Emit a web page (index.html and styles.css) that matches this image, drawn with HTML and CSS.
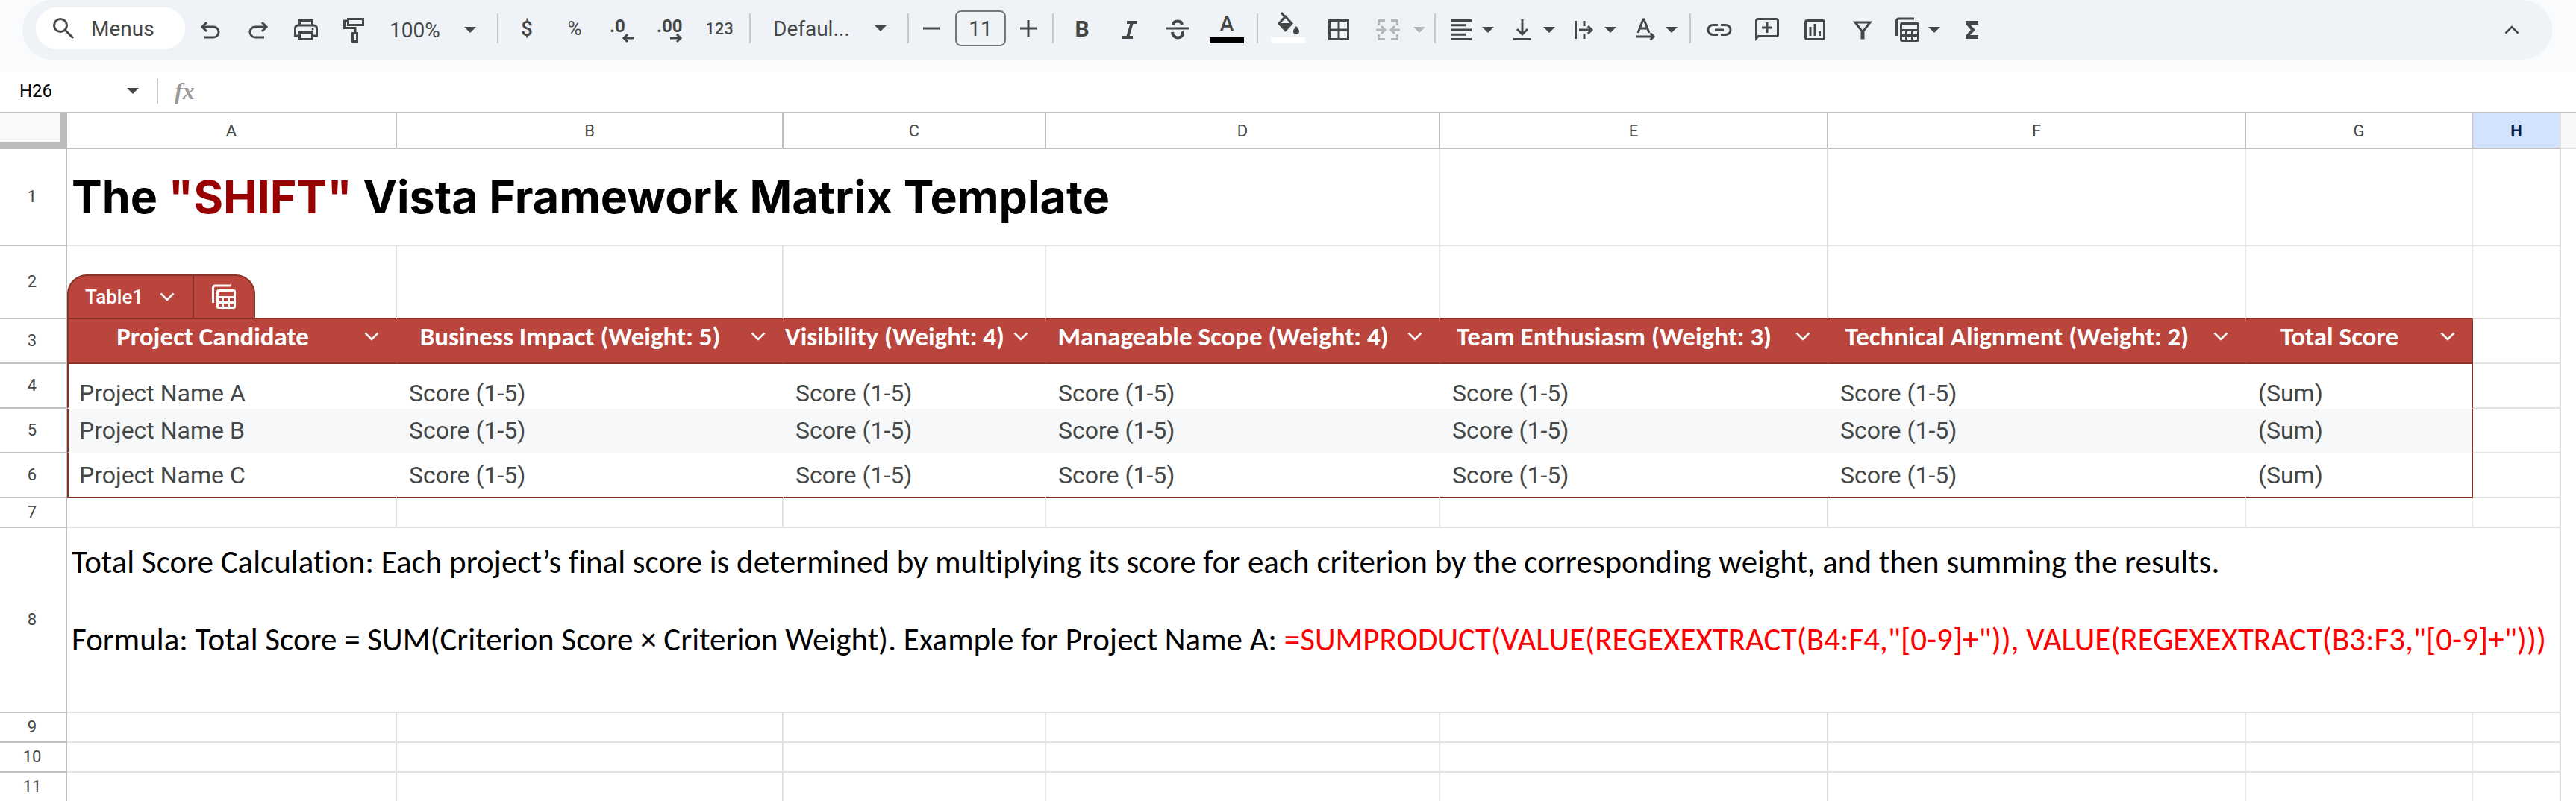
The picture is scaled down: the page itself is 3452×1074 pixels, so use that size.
FILE: index.html
```html
<!DOCTYPE html>
<html lang="en">
<head>
<meta charset="utf-8">
<title>Vista Framework Matrix</title>
<link rel="stylesheet" href="styles.css">
</head>
<body>
<svg class="defs" aria-hidden="true">
  <symbol id="arrow" viewBox="0 0 16 8"><path d="M0 0h16L8 8z" fill="currentColor"/></symbol>
  <symbol id="chevron" viewBox="0 0 20 12"><path d="M1.500 1.500L10 10l8.500-8.500" fill="none" stroke="currentColor" stroke-width="2.500"/></symbol>
  <symbol id="calc" viewBox="0 0 36 36"><path d="M3.500 26V6a3 3 0 0 1 3-3H27" fill="none" stroke="currentColor" stroke-width="3"/><path fill="currentColor" fill-rule="evenodd" d="M11 8h20a3 3 0 0 1 3 3v20a3 3 0 0 1-3 3H11a3 3 0 0 1-3-3V11a3 3 0 0 1 3-3zM11 11v6h20v-6zM11 20v4h4v-4zM18 20v4h5v-4zM26 20v4h5v-4zM11 27v4h4v-4zM18 27v4h5v-4zM26 27v4h5v-4z"/></symbol>
</svg>

<header class="chrome">
  <div class="toolbar" role="toolbar" aria-label="Formatting">
    <button class="search"><svg class="search-icon" viewBox="0 0 30 30"><circle cx="11" cy="11" r="8.500"/><path d="M17 17l11 11"/></svg>Menus</button>
    <button class="tool" aria-label="Undo"><svg class="icon" viewBox="0 0 36 36"><path d="M13 8L7 14l6 6M7 14h15a7 7 0 0 1 0 14H10"/></svg></button>
    <button class="tool" aria-label="Redo"><svg class="icon" viewBox="0 0 36 36"><path d="M23 8l6 6-6 6M29 14H14a7 7 0 0 0 0 14h12"/></svg></button>
    <button class="tool" aria-label="Print"><svg class="icon" viewBox="0 0 36 36"><path d="M9.500 12V5.500h17V12M9 26H3.500V16a4 4 0 0 1 4-4h21a4 4 0 0 1 4 4v10H27M9.500 21.500h17v9h-17z"/><circle class="solid" cx="27" cy="17" r="1.500"/></svg></button>
    <button class="tool" aria-label="Paint format"><svg class="icon" viewBox="0 0 36 36"><path d="M10.500 3.500h20v8h-20zM10 6H5.500v9.500H20V22M16.500 22.500h6v11h-6z"/></svg></button>
    <span class="picker picker-zoom"><select aria-label="Zoom"><option>100%</option></select><svg class="arrow"><use href="#arrow"/></svg></span>
    <span class="sep"></span>
    <button class="tool currency" aria-label="Format as currency">$</button>
    <button class="tool percent" aria-label="Format as percent">%</button>
    <button class="tool" aria-label="Decrease decimal places"><svg class="icon" viewBox="0 0 36 36"><text class="decimals" x="1" y="21">.0</text><path d="M34 29H20M25 24l-5 5 5 5"/></svg></button>
    <button class="tool" aria-label="Increase decimal places"><svg class="icon" viewBox="0 0 36 36"><text class="decimals" x="0" y="21">.00</text><path d="M18 29h14M27 24l5 5-5 5"/></svg></button>
    <button class="tool wide number">123</button>
    <span class="sep"></span>
    <span class="picker picker-font"><select aria-label="Font"><option>Defaul...</option></select><svg class="arrow"><use href="#arrow"/></svg></span>
    <span class="sep"></span>
    <span class="stepper">
      <button aria-label="Decrease font size"><svg class="icon-small" viewBox="0 0 22 22"><path d="M0 11h22"/></svg></button>
      <input aria-label="Font size" value="11">
      <button aria-label="Increase font size"><svg class="icon-small" viewBox="0 0 22 22"><path d="M0 11h22M11 0v22"/></svg></button>
    </span>
    <span class="sep"></span>
    <button class="tool bold" aria-label="Bold">B</button>
    <button class="tool" aria-label="Italic"><svg class="icon" viewBox="0 0 36 36"><path class="thick" d="M14 8h14M8 28h14M21 8l-6 20"/></svg></button>
    <button class="tool" aria-label="Strikethrough"><svg class="icon" viewBox="0 0 36 36"><path d="M2 16h32"/><path class="thick" d="M24 11c-.5-3-3-4.500-6-4.500s-6 1.500-6 5M11 21c.5 5 3.500 7.500 7 7.500s7-2 7-6c0-1-.3-1.500-.8-2.500"/></svg></button>
    <button class="tool wide swatch" aria-label="Text color"><span class="letter">A</span><span class="bar bar-black"></span></button>
    <span class="sep"></span>
    <button class="tool wide swatch" aria-label="Fill color"><svg class="fill-icon" viewBox="0 0 32 30"><path d="M7 1l5 6M12.500 6L4 15.500l8.500 9 8.500-9z"/><path class="solid" d="M3 15h19l-9.500 11zM27 19c3 4 4 5 4 7a4 4 0 0 1-8 0c0-2 1-3 4-7z"/></svg><span class="bar bar-white"></span></button>
    <button class="tool wide" aria-label="Borders"><svg class="icon" viewBox="0 0 36 36"><path d="M5.500 5.500h25v25h-25zM18 5v26M5 18h26"/></svg></button>
    <button class="tool merge" aria-label="Merge cells" disabled><svg class="icon" viewBox="0 0 36 36"><path d="M5.500 12V5.500H14M22 5.500h8.500V12M30.500 24v6.500H22M14 30.500H5.500V24M2 18h11M9 13l5 5-5 5M34 18H23M27 13l-5 5 5 5"/></svg><svg class="arrow"><use href="#arrow"/></svg></button>
    <span class="sep"></span>
    <button class="tool menu" aria-label="Horizontal align"><svg class="icon" viewBox="0 0 36 36"><path d="M4 5.500h28M4 11.800h20M4 18h28M4 24.200h20M4 30.500h28"/></svg><svg class="arrow"><use href="#arrow"/></svg></button>
    <button class="tool menu" aria-label="Vertical align"><svg class="icon" viewBox="0 0 36 36"><path d="M18 4v20M11 17l7 7 7-7M6 30.500h24"/></svg><svg class="arrow"><use href="#arrow"/></svg></button>
    <button class="tool menu" aria-label="Text wrapping"><svg class="icon" viewBox="0 0 36 36"><path d="M7.500 6v24M19 6v7M19 23v7M12 18h17M24 13l5 5-5 5"/></svg><svg class="arrow"><use href="#arrow"/></svg></button>
    <button class="tool menu" aria-label="Text rotation"><svg class="icon" viewBox="0 0 36 36"><path d="M9 22l7-18h1l7 18M12 16h9M6 27h24M25.500 22.500L30 27l-4.500 4.500"/></svg><svg class="arrow"><use href="#arrow"/></svg></button>
    <span class="sep"></span>
    <button class="tool" aria-label="Insert link"><svg class="icon" viewBox="0 0 36 36"><path d="M16 11.500H9.500a6.500 6.500 0 0 0 0 13H16M20 11.500h6.500a6.500 6.500 0 0 1 0 13H20M12 18h12"/></svg></button>
    <button class="tool" aria-label="Insert comment"><svg class="icon" viewBox="0 0 36 36"><path d="M3.500 30V5.500a2 2 0 0 1 2-2h25a2 2 0 0 1 2 2v19a2 2 0 0 1-2 2H6M18 8v14M11 15h14"/><path class="solid" d="M2 33V25h8z"/></svg></button>
    <button class="tool" aria-label="Insert chart"><svg class="icon" viewBox="0 0 36 36"><rect x="5.500" y="5.500" width="25" height="25" rx="2"/><path d="M12 14v12M18 10v16M24.500 20v6"/></svg></button>
    <button class="tool" aria-label="Create a filter"><svg class="icon" viewBox="0 0 36 36"><path d="M8 8h20l-9 11.500V29h-2v-9.500z"/></svg></button>
    <button class="tool menu" aria-label="Table views"><svg class="icon plain"><use href="#calc"/></svg><svg class="arrow"><use href="#arrow"/></svg></button>
    <button class="tool" aria-label="Functions"><svg class="icon plain" viewBox="0 0 36 36"><path fill="currentColor" d="M10 6h17v5H16l7 7-7 7h11v5H10v-4l7-8-7-8z"/></svg></button>
    <button class="tool collapse" aria-label="Hide the menus"><svg class="chevron up"><use href="#chevron"/></svg></button>
  </div>
</header>

<div class="formula-bar">
  <input class="name-box" aria-label="Name box" value="H26">
  <button class="name-menu" aria-label="Named ranges"><svg class="arrow"><use href="#arrow"/></svg></button>
  <label class="fx" for="formula">fx</label>
  <input class="formula" id="formula">
</div>

<table class="sheet">
  <colgroup>
    <col class="w-head"><col class="w-a"><col class="w-b"><col class="w-c"><col class="w-d"><col class="w-e"><col class="w-f"><col class="w-g"><col class="w-h"><col>
  </colgroup>
  <thead>
    <tr class="letters"><td class="corner"></td><th>A</th><th>B</th><th>C</th><th>D</th><th>E</th><th>F</th><th>G</th><th class="current">H</th><td class="edge"></td></tr>
  </thead>
  <tbody>
    <tr class="row-title"><th>1</th><td class="title" colspan="4">The <span class="accent">"SHIFT"</span> Vista Framework Matrix Template</td><td></td><td></td><td></td><td></td></tr>
    <tr class="row-tab"><th>2</th>
      <td class="tab-cell"><div class="tab"><button class="tab-name">Table1<svg class="chevron"><use href="#chevron"/></svg></button><button class="tab-views" aria-label="Table views"><svg class="icon plain"><use href="#calc"/></svg></button></div></td>
      <td></td><td></td><td></td><td></td><td></td><td></td><td></td></tr>
    <tr class="row-fields"><th>3</th>
      <td><div class="field"><span>Project Candidate</span><button aria-label="Project Candidate options"><svg class="chevron"><use href="#chevron"/></svg></button></div></td>
      <td><div class="field"><span>Business Impact (Weight: 5)</span><button aria-label="Business Impact options"><svg class="chevron"><use href="#chevron"/></svg></button></div></td>
      <td><div class="field"><span>Visibility (Weight: 4)</span><button aria-label="Visibility options"><svg class="chevron"><use href="#chevron"/></svg></button></div></td>
      <td><div class="field"><span>Manageable Scope (Weight: 4)</span><button aria-label="Manageable Scope options"><svg class="chevron"><use href="#chevron"/></svg></button></div></td>
      <td><div class="field"><span>Team Enthusiasm (Weight: 3)</span><button aria-label="Team Enthusiasm options"><svg class="chevron"><use href="#chevron"/></svg></button></div></td>
      <td><div class="field"><span>Technical Alignment (Weight: 2)</span><button aria-label="Technical Alignment options"><svg class="chevron"><use href="#chevron"/></svg></button></div></td>
      <td><div class="field"><span>Total Score</span><button aria-label="Total Score options"><svg class="chevron"><use href="#chevron"/></svg></button></div></td>
      <td></td></tr>
    <tr class="record low"><th>4</th><td>Project Name A</td><td>Score (1-5)</td><td>Score (1-5)</td><td>Score (1-5)</td><td>Score (1-5)</td><td>Score (1-5)</td><td>(Sum)</td><td></td></tr>
    <tr class="record band"><th>5</th><td>Project Name B</td><td>Score (1-5)</td><td>Score (1-5)</td><td>Score (1-5)</td><td>Score (1-5)</td><td>Score (1-5)</td><td>(Sum)</td><td></td></tr>
    <tr class="record last"><th>6</th><td>Project Name C</td><td>Score (1-5)</td><td>Score (1-5)</td><td>Score (1-5)</td><td>Score (1-5)</td><td>Score (1-5)</td><td>(Sum)</td><td></td></tr>
    <tr class="row-empty"><th>7</th><td></td><td></td><td></td><td></td><td></td><td></td><td></td><td></td></tr>
    <tr class="row-notes"><th>8</th><td class="notes" colspan="8">
      <p>Total Score Calculation: Each project’s final score is determined by multiplying its score for each criterion by the corresponding weight, and then summing the results.</p>
      <p>Formula: Total Score = SUM(Criterion Score × Criterion Weight). Example for Project Name A: <span class="formula-text">=SUMPRODUCT(VALUE(REGEXEXTRACT(B4:F4,"[0-9]+")), VALUE(REGEXEXTRACT(B3:F3,"[0-9]+")))</span></p></td></tr>
    <tr class="row-empty"><th>9</th><td></td><td></td><td></td><td></td><td></td><td></td><td></td><td></td></tr>
    <tr class="row-empty"><th>10</th><td></td><td></td><td></td><td></td><td></td><td></td><td></td><td></td></tr>
    <tr class="row-empty"><th>11</th><td></td><td></td><td></td><td></td><td></td><td></td><td></td><td></td></tr>
  </tbody>
</table>
</body>
</html>
```
FILE: styles.css
```css
:root {
  --ink: #444746;
  --line: #e1e1e1;
  --line-strong: #c0c0c0;
  --red: #b9453c;
  --red-dark: #86332a;
}

* { box-sizing: border-box; }

body {
  margin: 0;
  background: #fff;
  color: var(--ink);
  font-family: Roboto, sans-serif;
  font-size: 28px;
  overflow: hidden;
}

button, input, select {
  margin: 0;
  padding: 0;
  border: 0;
  background: none;
  color: inherit;
  font: inherit;
}

select { appearance: none; }

.defs { display: none; }

/* Toolbar */
.chrome {
  padding: 0 32px 16px 30px;
  background: #f9fbfd;
}

.toolbar {
  display: flex;
  align-items: center;
  height: 80px;
  padding: 0 22px 4px 18px;
  border-radius: 40px;
  background: #eff3f7;
}

.search {
  display: flex;
  align-items: center;
  gap: 22px;
  width: 200px;
  height: 56px;
  margin-right: 2px;
  padding-left: 22px;
  border-radius: 28px;
  background: #fff;
}

.search-icon { width: 30px; height: 30px; }

.search-icon, .icon, .icon-small, .fill-icon {
  flex: none;
  fill: none;
  stroke: currentColor;
  stroke-width: 3;
}

.icon { width: 36px; height: 36px; }
.icon-small { width: 22px; height: 22px; }
.icon.plain { stroke: none; }
.thick { stroke-width: 4; }
.solid { fill: currentColor; stroke: none; }

.decimals {
  fill: currentColor;
  stroke: none;
  font-size: 24px;
  font-weight: 700;
}

.tool {
  display: flex;
  align-items: center;
  justify-content: center;
  flex: none;
  width: 64px;
  height: 56px;
}

.tool .icon, .tool .arrow, .tool .chevron { margin-top: 4px; }
.tool.wide { width: 68px; }
.tool.menu, .tool.merge { justify-content: flex-start; gap: 10px; width: 82px; padding-left: 10px; }
.tool.merge { gap: 16px; width: 88px; padding-left: 14px; color: #b4b8ba; }
.tool.collapse { margin-left: auto; }

.arrow { flex: none; width: 16px; height: 8px; }
.chevron { flex: none; width: 20px; height: 12px; }
.chevron.up { transform: rotate(180deg); }

.currency { font-size: 28px; font-weight: 500; }
.percent { font-size: 26px; }
.number { font-size: 22px; font-weight: 500; }
.bold { font-size: 30px; font-weight: 700; }

.tool.swatch {
  flex-direction: column;
  align-self: flex-start;
  justify-content: flex-end;
  gap: 4px;
  height: 44px;
  margin-top: 14px;
}
.letter { line-height: 28px; font-weight: 500; }
.fill-icon { width: 32px; height: 30px; }
.bar { flex: none; width: 46px; height: 8px; }
.bar-black { background: #000; }
.bar-white { background: #fff; }

.sep {
  flex: none;
  width: 2px;
  height: 40px;
  margin: 0 6px;
  background: #c7cacd;
}

.picker { display: grid; align-items: center; flex: none; }
.picker > * { grid-area: 1 / 1; }
.picker select { height: 56px; }
.picker .arrow { justify-self: end; margin-right: 22px; pointer-events: none; }
.picker-zoom { width: 154px; padding-top: 4px; }
.picker-zoom select { padding-left: 16px; }
.picker-font { width: 198px; }
.picker-font select { padding-left: 24px; }

.stepper {
  display: flex;
  align-items: center;
  gap: 8px;
  flex: none;
}

.stepper button { display: flex; justify-content: center; width: 48px; }
.stepper button:last-child { width: 44px; margin-right: 4px; }
.stepper input {
  width: 68px;
  height: 48px;
  border: 2px solid #747775;
  border-radius: 8px;
  text-align: center;
}

/* Name box and formula input */
.formula-bar {
  display: flex;
  align-items: center;
  height: 54px;
  padding-bottom: 2px;
}

.name-box { width: 162px; padding-left: 26px; color: #000; font-size: 24px; }
.name-menu {
  display: flex;
  align-items: center;
  padding-left: 8px;
  width: 50px;
  height: 34px;
  border-right: 2px solid #c7c7c7;
}

.fx {
  padding: 0 16px 0 22px;
  color: #999;
  font: italic 700 32px "Liberation Serif", serif;
}

.formula { flex: 1; }

/* Grid */
.sheet {
  width: 100%;
  table-layout: fixed;
  border-collapse: separate;
  border-spacing: 0;
  border-top: 2px solid var(--line-strong);
}

.w-head { width: 90px; }
.w-a { width: 442px; }
.w-b { width: 518px; }
.w-c { width: 352px; }
.w-d { width: 528px; }
.w-e { width: 520px; }
.w-f { width: 560px; }
.w-g { width: 304px; }
.w-h { width: 118px; }

.sheet th, .sheet td {
  padding: 0;
  border: 0 solid var(--line);
  border-width: 0 2px 2px 0;
}

.sheet th {
  border-color: var(--line-strong);
  font-size: 22px;
  font-weight: 400;
}
.sheet tbody th { padding: 0 2px 1px 0; }

.letters { height: 48px; }
.letters .corner {
  border-width: 0 10px 10px 0;
  border-color: #bcbcbc;
  background: #f8f9fa;
}
.letters .current {
  border-right-color: var(--line);
  background: #d3e3fd;
  color: #041e49;
  font-weight: 700;
}
.letters .edge { border-right: 0; background: #f8f8f8; }

.row-title { height: 130px; }
.row-tab { height: 98px; }
.row-fields, .record { height: 60px; }
.row-empty { height: 40px; }
.row-notes { height: 248px; }

.sheet .title {
  padding-left: 6px;
  color: #000;
  font: 700 61px/76px Inter, sans-serif;
}
.accent { color: #990000; }

.row-tab td:not(:last-child), .row-fields td:not(:last-child) { border-bottom-color: var(--red-dark); }
.sheet .tab-cell { vertical-align: bottom; }

.tab {
  display: flex;
  width: 252px;
  height: 58px;
  border: 2px solid var(--red-dark);
  border-bottom: 0;
  border-radius: 26px 26px 0 0;
  background: var(--red);
  color: #fff;
}

.tab-name {
  display: flex;
  align-items: center;
  justify-content: space-between;
  width: 168px;
  padding: 0 24px 0 22px;
  border-right: 2px solid var(--red-dark);
  font-size: 26px;
  font-weight: 500;
}

.tab-views { display: flex; align-items: center; justify-content: center; flex: 1; }

.row-fields td { vertical-align: top; }
.row-fields td:not(:last-child) { border-right-color: var(--red); background: var(--red); }
.sheet .row-fields td:nth-child(8), .sheet .record td:nth-child(8) { border-right-color: var(--red-dark); }
.sheet .row-fields td:nth-child(2), .sheet .record td:nth-child(2) { border-left: 2px solid var(--red-dark); }

.field {
  display: flex;
  align-items: center;
  height: 46px;
  padding-right: 12px;
  color: #fff;
  font: 700 35px/46px Carlito, Calibri, Lato, sans-serif;
  white-space: nowrap;
}
.field span { flex: 1; text-align: center; }
.field button { display: flex; justify-content: center; width: 40px; }

.record td { font-size: 32px; line-height: 38px; }
.record td:not(:last-child) { border-color: #fff; }
.sheet .record td { padding-left: 16px; }
.sheet .record td:nth-child(2) { padding-left: 14px; }
.low td { vertical-align: bottom; }
.sheet .low td:not(:last-child) { border-bottom-color: #fff; }
.band td:not(:last-child) { border-color: #f6f8fa; background: #f6f8fa; }
.sheet .last td:not(:last-child) { border-bottom-color: var(--red-dark); }

.sheet .notes {
  padding: 20px 0 0 6px;
  color: #000;
  font: 400 43px/52px Carlito, Calibri, Lato, sans-serif;
  font-variant-ligatures: none;
  vertical-align: top;
  white-space: nowrap;
}
.notes p { margin: 0 0 52px; }
.formula-text { color: #f00; }
```
